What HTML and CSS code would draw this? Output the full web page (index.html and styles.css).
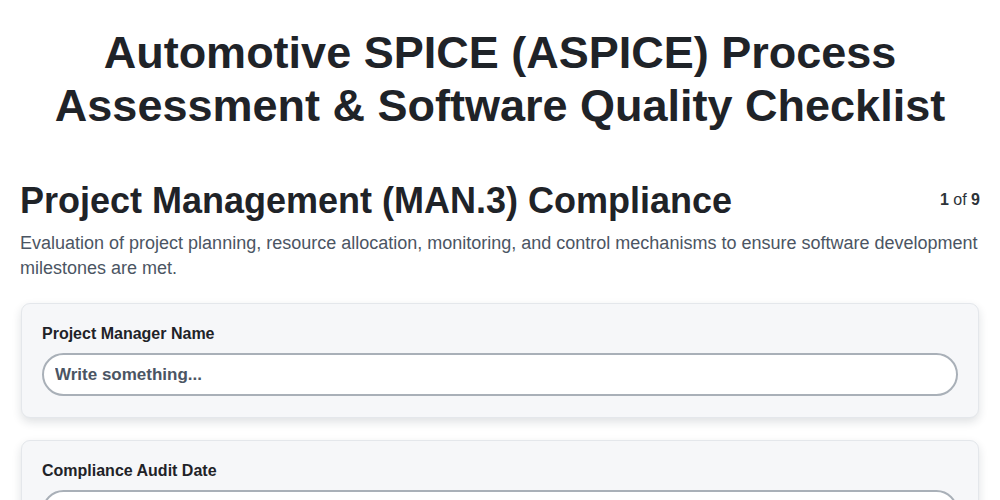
FILE: index.html
```html
<!DOCTYPE html>
<html lang="en">
<head>
<meta charset="utf-8">
<title>ASPICE Checklist</title>
<link rel="stylesheet" href="styles.css">
</head>
<body>
<main class="page">
  <h1 class="page-title">Automotive SPICE (ASPICE) Process Assessment &amp; Software Quality Checklist</h1>

  <section class="step">
    <header class="step-head">
      <h2 class="step-title">Project Management (MAN.3) Compliance</h2>
      <div class="step-count"><b>1</b> of <b>9</b></div>
    </header>
    <p class="step-desc">Evaluation of project planning, resource allocation, monitoring, and control mechanisms to ensure software development milestones are met.</p>

    <div class="field-card">
      <label class="field-label" for="pm-name">Project Manager Name</label>
      <input class="field-input" id="pm-name" type="text" placeholder="Write something...">
    </div>

    <div class="field-card">
      <label class="field-label" for="audit-date">Compliance Audit Date</label>
      <input class="field-input" id="audit-date" type="text" placeholder="Write something...">
    </div>
  </section>
</main>
</body>
</html>
```

FILE: styles.css
```css
* { box-sizing: border-box; }

html, body {
  margin: 0;
  background: #ffffff;
}

body {
  font-family: "Liberation Sans", Arial, sans-serif;
  color: #1f2328;
}

.page {
  padding: 26px 20px 40px;
}

.page-title {
  margin: 0 0 48px;
  text-align: center;
  font-size: 45px;
  line-height: 53px;
  font-weight: 700;
  color: #1f2328;
}

.step-head {
  display: flex;
  justify-content: space-between;
  align-items: flex-start;
}

.step-title {
  margin: 0;
  font-size: 36px;
  line-height: 41px;
  font-weight: 700;
  color: #1f2328;
}

.step-count {
  font-size: 16px;
  line-height: 20px;
  margin-top: 10px;
  color: #2d3339;
}

.step-desc {
  margin: 10px 0 22px;
  font-size: 18px;
  line-height: 25px;
  color: #4b5563;
}

.field-card {
  margin: 0 1px 22px;
  padding: 21px 20px 21px;
  background: #f6f7f9;
  border: 1px solid #e4e7eb;
  border-radius: 9px;
  box-shadow: 0 4px 10px rgba(30, 40, 60, 0.14);
}

.field-label {
  display: block;
  font-size: 16px;
  line-height: 18px;
  font-weight: 700;
  color: #1f2328;
  margin-bottom: 10px;
}

.field-input {
  display: block;
  width: 100%;
  height: 43px;
  padding: 0 11px;
  border: 2px solid #a9b0b8;
  border-radius: 22px;
  background: #ffffff;
  font-family: inherit;
  font-size: 17px;
  font-weight: 700;
  color: #1f2328;
  outline: none;
}

.field-input::placeholder {
  color: #4b5563;
  opacity: 1;
}
```
